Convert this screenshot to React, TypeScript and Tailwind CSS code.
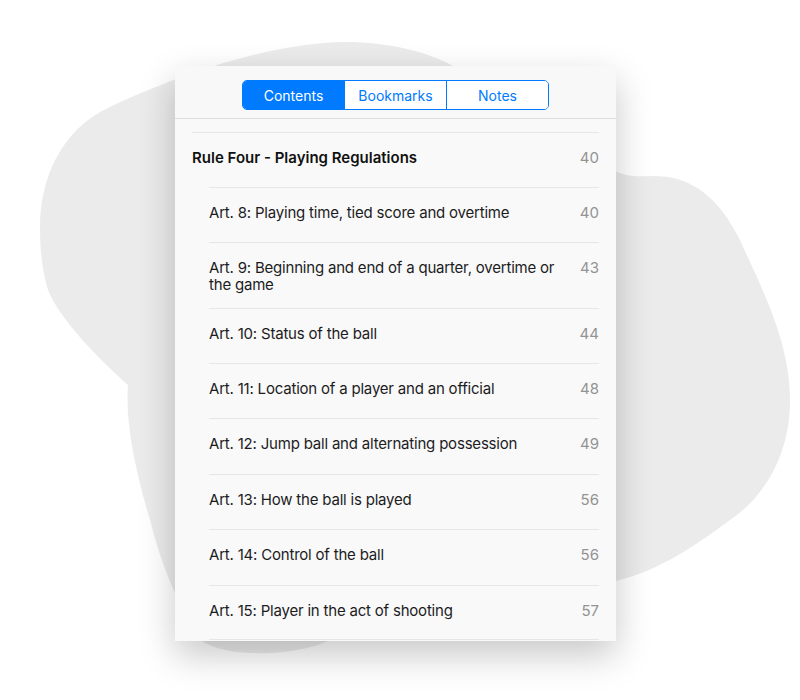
import React from "react";

const articles = [
  { title: "Art. 8: Playing time, tied score and overtime", page: 40 },
  { title: "Art. 9: Beginning and end of a quarter, overtime or the game", page: 43 },
  { title: "Art. 10: Status of the ball", page: 44 },
  { title: "Art. 11: Location of a player and an official", page: 48 },
  { title: "Art. 12: Jump ball and alternating possession", page: 49 },
  { title: "Art. 13: How the ball is played", page: 56 },
  { title: "Art. 14: Control of the ball", page: 56 },
  { title: "Art. 15: Player in the act of shooting", page: 57 },
];

const tabs = ["Contents", "Bookmarks", "Notes"];

function Blob() {
  return (
    <svg
      className="absolute left-0 top-0"
      width="800"
      height="700"
      viewBox="0 0 800 700"
    >
      <path
        fill="#ebebeb"
        d="M 40 227 C 40 180, 60 130, 110 107 C 150 88, 250 45, 340 42 C 380 41, 430 50, 460 70 L 600 160 C 620 180, 640 176, 655 176 C 700 176, 725 210, 740 240 C 760 285, 790 340, 790 400 C 790 460, 760 500, 730 520 C 690 550, 650 575, 610 582 L 330 640 C 300 655, 230 660, 200 640 C 175 600, 160 560, 150 520 C 135 470, 125 420, 128 385 C 100 360, 60 320, 48 290 C 42 270, 40 250, 40 227 Z"
      />
    </svg>
  );
}

export default function App() {
  return (
    <div
      className="relative w-[800px] h-[700px] overflow-hidden bg-white"
      style={{ fontFamily: "Inter, 'Noto Sans', sans-serif" }}
    >
      <Blob />
      <div className="relative pt-[66px] pl-[175px]">
        <div className="w-[441px] h-[575px] overflow-hidden bg-[#f9f9f9] shadow-[0_14px_34px_rgba(0,0,0,0.22)]">
          {/* header with segmented control */}
          <div className="flex justify-center pt-[14px] pb-2 bg-[#f8f8f8] border-b border-[#dedede]">
            <div className="flex h-[30px] rounded-[5px] border border-[#007aff] overflow-hidden">
              {tabs.map((t, i) => (
                <div
                  key={t}
                  className={
                    i === 0
                      ? "w-[101px] flex items-center justify-center text-[14px] bg-[#007aff] text-white"
                      : "w-[102px] flex items-center justify-center text-[14px] text-[#007aff] bg-white border-l border-[#007aff]"
                  }
                >
                  {t}
                </div>
              ))}
            </div>
          </div>

          <div className="pt-[13px]">
            <div className="mx-[17px] flex justify-between items-start pt-4 pb-[15px] min-h-[55px] border-t border-[#e6e6e6]">
              <span className="text-[15px] leading-[17px] font-semibold text-[#111]">
                Rule Four - Playing Regulations
              </span>
              <span className="text-[15px] leading-[17px] text-[#939393]">40</span>
            </div>
            {articles.map((a, i) => (
              <div
                key={a.title}
                className={
                  "ml-[34px] mr-[17px] flex justify-between items-start gap-4 pt-4 pb-[15px] border-t border-[#e6e6e6]" +
                  (i >= 4 ? " min-h-[55.5px]" : " min-h-[55px]") +
                  (i === articles.length - 1 ? " border-b" : "")
                }
              >
                <span className="text-[15px] leading-[17px] tracking-[-0.2px] text-[#1c1c1e] max-w-[352px]">
                  {a.title}
                </span>
                <span className="text-[15px] leading-[17px] text-[#939393]">{a.page}</span>
              </div>
            ))}
          </div>
        </div>
      </div>
    </div>
  );
}
